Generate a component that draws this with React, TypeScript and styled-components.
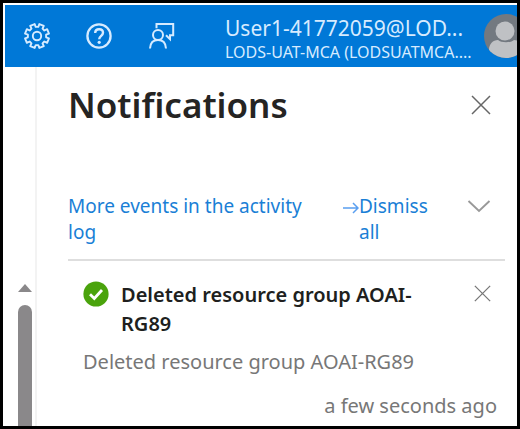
import React from "react";
import styled, { createGlobalStyle } from "styled-components";

const GlobalStyle = createGlobalStyle`
  *, *::before, *::after { box-sizing: border-box; }
  body { margin: 0; background: #000; font-family: "Noto Sans", "Open Sans", sans-serif; }
  h1, h2, p { margin: 0; }
  svg { display: block; }
`;

const Frame = styled.div`
  display: flex;
  flex-direction: column;
  min-height: 100vh;
  border: 3px solid #000;
  background: #fff;
  overflow: hidden;
`;

const TopBar = styled.header`
  display: flex;
  align-items: center;
  height: 62px;
  margin: 2px 0 0 2px;
  padding-left: 17px;
  background: #0078d7;
  color: #d6ebff;
  overflow: hidden;
`;

const IconButton = styled.button`
  display: flex;
  align-items: center;
  justify-content: center;
  flex: none;
  padding: 0;
  border: 0;
  background: none;
  color: inherit;
  cursor: pointer;
`;

const BarButton = styled(IconButton)`
  width: 30px;
  height: 40px;
  margin-right: 32px;
`;

const Account = styled.button`
  display: flex;
  align-items: center;
  justify-content: space-between;
  flex: 1;
  min-width: 0;
  margin-left: 17px;
  padding: 0;
  border: 0;
  background: none;
  color: inherit;
  font-family: inherit;
  text-align: left;
  white-space: nowrap;
  cursor: pointer;
`;

const AccountText = styled.span`
  display: flex;
  flex-direction: column;
  padding-top: 6px;
`;

const UserName = styled.span`
  font-size: 21px;
  line-height: 26px;
`;

const Directory = styled.span`
  font-size: 16px;
  line-height: 22px;
`;

const AvatarClip = styled.span`
  flex: none;
  width: 33px;
  overflow: hidden;
`;

const Body = styled.div`
  display: flex;
  flex: 1;
`;

const Gutter = styled.div`
  display: flex;
  flex-direction: column;
  align-items: center;
  flex: none;
  width: 34px;
  padding: 217px 0 0 11px;
  border-right: 2px solid #f3f3f3;
`;

const ScrollThumb = styled.div`
  flex: 1;
  width: 14px;
  margin-top: 13px;
  border-radius: 7px 7px 0 0;
  background: #8a888a;
`;

const Panel = styled.main`
  flex: 1;
  min-width: 0;
  padding: 12px 12px 0 31px;
`;

const PanelHeader = styled.div`
  display: flex;
  align-items: center;
  justify-content: space-between;
  padding-right: 14px;
  color: #666;
`;

const Title = styled.h1`
  color: #252423;
  font-size: 35px;
  font-weight: 600;
  line-height: 52px;
`;

const Actions = styled.div`
  display: flex;
  align-items: flex-start;
  margin-top: 62px;
  padding-bottom: 14px;
  border-bottom: 2px solid #dedede;
  color: #999;
`;

const ActivityLink = styled.a`
  display: flex;
  flex: 1;
  align-items: flex-start;
  justify-content: space-between;
  color: #1a7fd6;
  font-size: 19px;
  line-height: 26px;
  text-decoration: none;
`;

const ActivityLabel = styled.span`
  max-width: 256px;
`;

const DismissButton = styled.button`
  width: 86px;
  margin-right: 22px;
  padding: 0;
  border: 0;
  background: none;
  color: #1a7fd6;
  font-family: inherit;
  font-size: 19px;
  line-height: 26px;
  text-align: left;
  cursor: pointer;
`;

const ChevronButton = styled(IconButton)`
  width: 24px;
  height: 26px;
  margin-right: 14px;
`;

const ArrowBox = styled.span`
  display: flex;
  align-items: center;
  height: 30px;
`;

const Notice = styled.article`
  padding: 19px 8px 0 15px;
  color: #777;
  font-size: 20px;
`;

const NoticeHeader = styled.div`
  display: flex;
  align-items: flex-start;
`;

const StatusBox = styled.span`
  flex: none;
  width: 38px;
  padding-top: 1px;
`;

const NoticeTitle = styled.h2`
  flex: 1;
  max-width: 310px;
  margin-right: auto;
  color: #201f1e;
  font-size: 20px;
  font-weight: 600;
  line-height: 29px;
`;

const NoticeClose = styled(IconButton)`
  width: 18px;
  height: 26px;
  margin-right: 6px;
`;

const NoticeText = styled.p`
  margin-top: 11px;
  line-height: 26px;
`;

const NoticeTime = styled.p`
  margin-top: 18px;
  line-height: 26px;
  text-align: right;
`;

function gearPath() {
  const pts: string[] = [];
  const n = 8;
  for (let i = 0; i < n; i++) {
    const c = (i * 2 * Math.PI) / n + Math.PI / n;
    const at = (r: number, a: number) =>
      `${(14 + r * Math.cos(a)).toFixed(2)} ${(14 + r * Math.sin(a)).toFixed(2)}`;
    pts.push(at(9.2, c - 0.25), at(12.2, c - 0.2), at(12.2, c + 0.2), at(9.2, c + 0.25));
  }
  return `M${pts.join("L")}Z`;
}

const GearIcon = () => (
  <svg width="28" height="28" viewBox="0 0 28 28" fill="none" stroke="currentColor" strokeWidth="1.9" strokeLinejoin="round">
    <path d={gearPath()} />
    <circle cx="14" cy="14" r="4.2" />
  </svg>
);

const HelpIcon = () => (
  <svg width="28" height="28" viewBox="0 0 28 28" fill="none" stroke="currentColor">
    <circle cx="14" cy="14" r="11.6" strokeWidth="2.3" />
    <path d="M10.2 10.9c0-2.3 1.6-3.7 3.9-3.7s3.9 1.4 3.9 3.5c0 3-3.8 3.3-3.8 6.500" strokeWidth="2.4" />
    <circle cx="14.2" cy="20.3" r="1.6" fill="currentColor" stroke="none" />
  </svg>
);

const FeedbackIcon = () => (
  <svg width="28" height="28" viewBox="0 0 28 28" fill="none" stroke="currentColor" strokeWidth="2">
    <path d="M9.5 6.2V2h16.7v11.2H23v4l-4-4" />
    <circle cx="11" cy="13" r="5" />
    <path d="M3 26.5c.3-5.3 3.4-8.4 8-8.4s7.7 3.1 8 8.4" />
  </svg>
);

const AvatarIcon = () => (
  <svg width="44" height="44" viewBox="0 0 44 44">
    <defs>
      <clipPath id="avatar-disc"><circle cx="22" cy="22" r="22" /></clipPath>
    </defs>
    <g clipPath="url(#avatar-disc)">
      <rect width="44" height="44" fill="#737980" />
      <circle cx="21" cy="17" r="9.5" fill="#bfc1c4" />
      <path d="M5 36c0-6 4-10 9-10 3 3 13 3 16 0 5 0 8 4 9 10v8H5z" fill="#bfc1c4" />
    </g>
  </svg>
);

const CrossIcon = ({ size }: { size: number }) => (
  <svg width={size} height={size} viewBox="0 0 20 20" fill="none" stroke="currentColor" strokeWidth="1.5">
    <path d="M1 1l18 18M19 1L1 19" />
  </svg>
);

const ArrowIcon = () => (
  <svg width="16" height="12" viewBox="0 0 16 12" fill="none" stroke="#5a9ff0" strokeWidth="1.5">
    <path d="M0 6h15M10 1l5 5-5 5" />
  </svg>
);

const ChevronIcon = () => (
  <svg width="24" height="14" viewBox="0 0 24 14" fill="none" stroke="currentColor" strokeWidth="1.9">
    <path d="M1.5 2L12 12 22.5 2" />
  </svg>
);

const SuccessIcon = () => (
  <svg width="26" height="26" viewBox="0 0 26 26">
    <circle cx="13" cy="13" r="12.6" fill="#4aa30c" />
    <path d="M7 13.2l4.3 4.3L19 9" fill="none" stroke="#fff" strokeWidth="2.8" />
  </svg>
);

const ScrollUpIcon = () => (
  <svg width="14" height="8" viewBox="0 0 14 8">
    <path d="M7 0l7 8H0z" fill="#8a888a" />
  </svg>
);

export default function App() {
  return (
    <>
      <GlobalStyle />
      <Frame>
        <TopBar>
          <BarButton aria-label="Settings"><GearIcon /></BarButton>
          <BarButton aria-label="Help"><HelpIcon /></BarButton>
          <BarButton aria-label="Feedback"><FeedbackIcon /></BarButton>
          <Account>
            <AccountText>
              <UserName>User1-41772059@LOD...</UserName>
              <Directory>LODS-UAT-MCA (LODSUATMCA....</Directory>
            </AccountText>
            <AvatarClip><AvatarIcon /></AvatarClip>
          </Account>
        </TopBar>
        <Body>
          <Gutter>
            <ScrollUpIcon />
            <ScrollThumb />
          </Gutter>
          <Panel>
            <PanelHeader>
              <Title>Notifications</Title>
              <IconButton aria-label="Close notifications"><CrossIcon size={20} /></IconButton>
            </PanelHeader>
            <Actions>
              <ActivityLink href="#activity-log">
                <ActivityLabel>More events in the activity log</ActivityLabel>
                <ArrowBox><ArrowIcon /></ArrowBox>
              </ActivityLink>
              <DismissButton>Dismiss all</DismissButton>
              <ChevronButton aria-label="More dismiss options"><ChevronIcon /></ChevronButton>
            </Actions>
            <Notice>
              <NoticeHeader>
                <StatusBox><SuccessIcon /></StatusBox>
                <NoticeTitle>Deleted resource group AOAI-RG89</NoticeTitle>
                <NoticeClose aria-label="Dismiss notification"><CrossIcon size={17} /></NoticeClose>
              </NoticeHeader>
              <NoticeText>Deleted resource group AOAI-RG89</NoticeText>
              <NoticeTime>a few seconds ago</NoticeTime>
            </Notice>
          </Panel>
        </Body>
      </Frame>
    </>
  );
}
